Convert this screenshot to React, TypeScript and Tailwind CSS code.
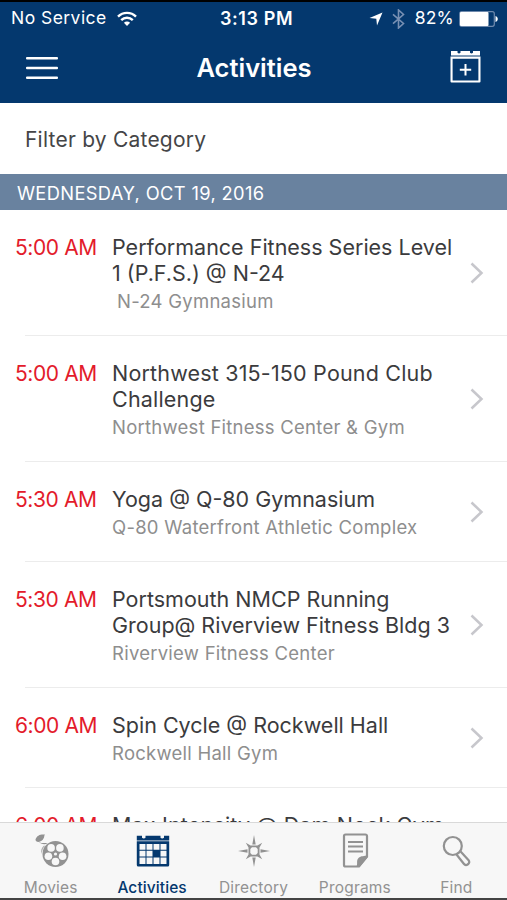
import type { ReactNode } from 'react';

type Activity = {
    time: string;
    title: string[];
    place: string;
    indent?: boolean;
    wide?: boolean;
};

const activities: Activity[] = [
    { time: '5:00 AM', title: ['Performance Fitness Series Level', '1 (P.F.S.) @ N-24'], place: 'N-24 Gymnasium', indent: true },
    { time: '5:00 AM', title: ['Northwest 315-150 Pound Club', 'Challenge'], place: 'Northwest Fitness Center & Gym', wide: true },
    { time: '5:30 AM', title: ['Yoga @ Q-80 Gymnasium'], place: 'Q-80 Waterfront Athletic Complex' },
    { time: '5:30 AM', title: ['Portsmouth NMCP Running', 'Group@ Riverview Fitness Bldg 3'], place: 'Riverview Fitness Center' },
    { time: '6:00 AM', title: ['Spin Cycle @ Rockwell Hall'], place: 'Rockwell Hall Gym' },
    { time: '6:00 AM', title: ['Max Intensity @ Dam Neck Gym'], place: 'Dam Neck Gym', wide: true },
];

function WifiIcon() {
    return (
        <svg width="20" height="16" viewBox="0 0 20 16" fill="none" stroke="white" strokeWidth="2.4">
            <path d="M1 5.6C6 .6 14 .6 19 5.6" />
            <path d="M4.2 9.1c3.3-3.2 8.3-3.2 11.6 0" />
            <path d="M10 15l-3.1-3.3c1.7-1.6 4.5-1.6 6.2 0z" fill="white" stroke="none" />
        </svg>
    );
}

function StatusBar() {
    return (
        <div className="flex h-[35px] items-center border-t-2 border-black pr-[9px] pl-[11px] text-[17.5px] text-white">
            <div className="flex flex-1 items-center gap-[10px]">
                <span className="tracking-[0.45px]">No Service</span>
                <WifiIcon />
            </div>
            <span className="pl-1 text-[18px] font-semibold tracking-[0.6px]">3:13 PM</span>
            <div className="flex flex-1 items-center justify-end">
                <svg width="14" height="14" viewBox="0 0 14 14" fill="white">
                    <path d="M13.5 .5L8 13.5 7.3 6.7.5 6z" />
                </svg>
                <svg className="ml-[9px]" width="13" height="20" viewBox="0 0 13 20" fill="none" stroke="#7890b3" strokeWidth="1.6">
                    <path d="M1 5.3l10.5 9.2L6.5 19V1l5 4.5L1 14.7" />
                </svg>
                <span className="ml-[10px] tracking-[0.2px]">82%</span>
                <svg className="ml-[5px]" width="39" height="16" viewBox="0 0 39 16">
                    <rect x=".7" y=".7" width="34.6" height="14.6" rx="2" fill="none" stroke="#6f8aad" strokeWidth="1.2" />
                    <rect x="1" y="1" width="28.5" height="14" rx="1" fill="white" />
                    <path d="M36.5 5c3 1 3 5 0 6z" fill="white" />
                </svg>
            </div>
        </div>
    );
}

function NavBar() {
    return (
        <div className="flex h-[68px] items-center justify-between px-[26px]">
            <svg className="mb-[3px]" width="32" height="24" viewBox="0 0 32 24" fill="white">
                <rect y="1" width="32" height="2.6" rx="1" />
                <rect y="10.7" width="32" height="2.6" rx="1" />
                <rect y="20.4" width="32" height="2.6" rx="1" />
            </svg>
            <h1 className="pb-0.5 text-[25.5px] font-semibold text-white">Activities</h1>
            <svg className="mb-[5px]" width="31" height="33" viewBox="0 0 31 33" fill="white">
                <path d="M1 1h6.5v1.8q1.5 1.4 3 0V1h9.5v1.8q1.5 1.4 3 0V1H30v4.6H1z" />
                <path d="M.5 6.5h30v25a1 1 0 0 1-1 1h-28a1 1 0 0 1-1-1zM2.6 8.8v21.6h25.8V8.8z" fillRule="evenodd" />
                <path d="M14.5 14h2v4.7h4.7v2h-4.7v4.7h-2v-4.7H9.8v-2h4.7z" />
            </svg>
        </div>
    );
}

function ActivityRow({ activity }: { activity: Activity }) {
    return (
        <li>
            <div className="flex pl-[15px]">
                <span className="w-[97px] shrink-0 pt-[25px] text-[21px] leading-[26px] tracking-[-0.4px] text-[#e31b2b]">{activity.time}</span>
                <div className="flex-1 pt-6 pb-5">
                    <div className={`text-[21.5px] leading-[26px] text-[#3b3b3d] ${activity.wide ? 'tracking-[0.18px]' : ''}`}>
                        {activity.title.map((line) => (
                            <div key={line} className="whitespace-nowrap">{line}</div>
                        ))}
                    </div>
                    <div className={`pt-px text-[18.5px] leading-7 tracking-[0.25px] whitespace-nowrap text-[#8e8e8e] ${activity.indent ? 'pl-[5px]' : ''}`}>
                        {activity.place}
                    </div>
                </div>
                <svg className="mr-[23px] shrink-0 self-center" width="14" height="22" viewBox="0 0 14 22" fill="none" stroke="#c7c7cc" strokeWidth="2.5">
                    <path d="M1.5 1.5L11.5 11 1.5 20.5" />
                </svg>
            </div>
            <div className="ml-[25px] h-px bg-[#ececec]" />
        </li>
    );
}

function Tab({ label, active, children }: { label: string; active?: boolean; children: ReactNode }) {
    return (
        <div className={`flex flex-1 flex-col items-center ${active ? 'text-[#04386e]' : 'text-[#929292]'}`}>
            <div className="flex h-14 items-center justify-center pb-px">{children}</div>
            <span className={`text-[15.5px] leading-[18px] ${active ? 'font-medium tracking-[0.1px]' : 'tracking-[0.2px]'}`}>{label}</span>
        </div>
    );
}

function TabBar() {
    return (
        <nav className="flex h-[78px] shrink-0 border-t border-b-2 border-t-[#d9d9d9] border-b-[#444] bg-[#f7f7f7]">
            <Tab label="Movies">
                <svg className="ml-0.5" width="34" height="34" viewBox="0 0 34 34" fill="currentColor">
                    <path d="M.5 5.5C2 1 5.5 0 10 .5 9 1.5 9.5 3 8.5 4.5 8 6.5 5.5 7.5 3.5 8 1.5 8 .5 7 .5 5.5z" />
                    <path d="M4 7.5C6 10.500 9.500 8 12.500 9.500 10 10.500 7 10.500 4.500 8.500z" />
                    <path d="M9 11.500C6.500 13.500 5.500 16.500 6.500 20 7 16.500 8 14 10 12z" opacity=".7" />
                    <circle cx="20.5" cy="20" r="13" />
                    <g fill="#f7f7f7">
                        <circle cx="16.1" cy="13.900" r="3.800" />
                        <circle cx="24.900" cy="13.900" r="3.800" />
                        <circle cx="27.600" cy="22.300" r="3.800" />
                        <circle cx="20.500" cy="27.500" r="3.800" />
                        <circle cx="13.400" cy="22.300" r="3.800" />
                        <circle cx="20.500" cy="20" r="1.600" />
                    </g>
                </svg>
            </Tab>
            <Tab label="Activities" active>
                <svg className="ml-0.5" width="34" height="32" viewBox="0 0 34 32" fill="currentColor">
                    <path d="M.8.8H6v2q1.800 1.400 3.500 0v-2h15v2q1.700 1.400 3.500 0v-2h5.200v4.700H.8z" />
                    <path fillRule="evenodd" d="M.8 6.200h32.400V30a1.500 1.500 0 0 1-1.500 1.500H2.300A1.500 1.500 0 0 1 .8 30zM3.500 9v5.800h6V9zm7 0v5.800h6V9zm7 0v5.800h6V9zm7 0v5.800h6V9zm-21 6.800v5.800h6v-5.800zm7 0v5.800h6v-5.800zm14 0v5.800h6v-5.800zm-21 6.800V29h6v-6.400zm7 0V29h6v-6.400zm7 0V29h6v-6.400zm7 0V29h6v-6.400z" />
                </svg>
            </Tab>
            <Tab label="Directory">
                <svg width="32" height="32" viewBox="0 0 32 32" fill="currentColor">
                    <path d="M16 0l1.700 9.500h-3.400zM16 32l1.700-9.500h-3.400zM0 16l9.500 1.700v-3.400zM32 16l-9.500 1.700v-3.400z" />
                    <path fillRule="evenodd" d="M7.800 7.800l4.800 2.700h6.800l4.800-2.700-2.700 4.800v6.800l2.700 4.800-4.800-2.700h-6.800l-4.800 2.700 2.700-4.800v-6.800zM14 12.300L12.300 14v4L14 19.700h4l1.700-1.700v-4L18 12.300z" />
                </svg>
            </Tab>
            <Tab label="Programs">
                <svg className="ml-0.5" width="27" height="35" viewBox="0 0 27 35" fill="none" stroke="currentColor" strokeWidth="2.200">
                    <path d="M3.500 1.500h20A1.500 1.500 0 0 1 25 3v20.500L17 33.500H3.500A1.500 1.500 0 0 1 2 32V3a1.500 1.500 0 0 1 1.500-1.500z" />
                    <path d="M6 9h15M6 13.500h15M6 18.500h15" />
                    <path d="M14.500 33.500c1.500-3-.5-6 2-8.500s6-1.500 9-3v2.500L17.500 34z" fill="currentColor" stroke="none" />
                </svg>
            </Tab>
            <Tab label="Find">
                <svg className="mt-px ml-px" width="29" height="32" viewBox="0 0 29 32" fill="none" stroke="currentColor" strokeWidth="2.200">
                    <circle cx="10.800" cy="11" r="9" />
                    <path d="M14.500 19.500l7.300 9.300c2.300 3 7.200-.6 4.800-3.600l-8-8.700" />
                </svg>
            </Tab>
        </nav>
    );
}

export default function App() {
    return (
        <div className="flex h-[900px] w-[507px] flex-col overflow-hidden bg-white font-['Inter',sans-serif]">
            <header className="shrink-0 bg-[#04386e]">
                <StatusBar />
                <NavBar />
            </header>
            <div className="flex h-[71px] shrink-0 items-center pt-0.5 pl-[25px] text-[21px] tracking-[0.22px] text-[#454547]">
                Filter by Category
            </div>
            <div className="flex h-9 shrink-0 items-center bg-[#69829f] pt-[3px] pl-[17px] text-[18.3px] tracking-[0.36px] text-white">
                WEDNESDAY, OCT 19, 2016
            </div>
            <main className="min-h-0 flex-1 overflow-hidden">
                <ul>
                    {activities.map((activity) => (
                        <ActivityRow key={activity.title[0]} activity={activity} />
                    ))}
                </ul>
            </main>
            <TabBar />
        </div>
    );
}
